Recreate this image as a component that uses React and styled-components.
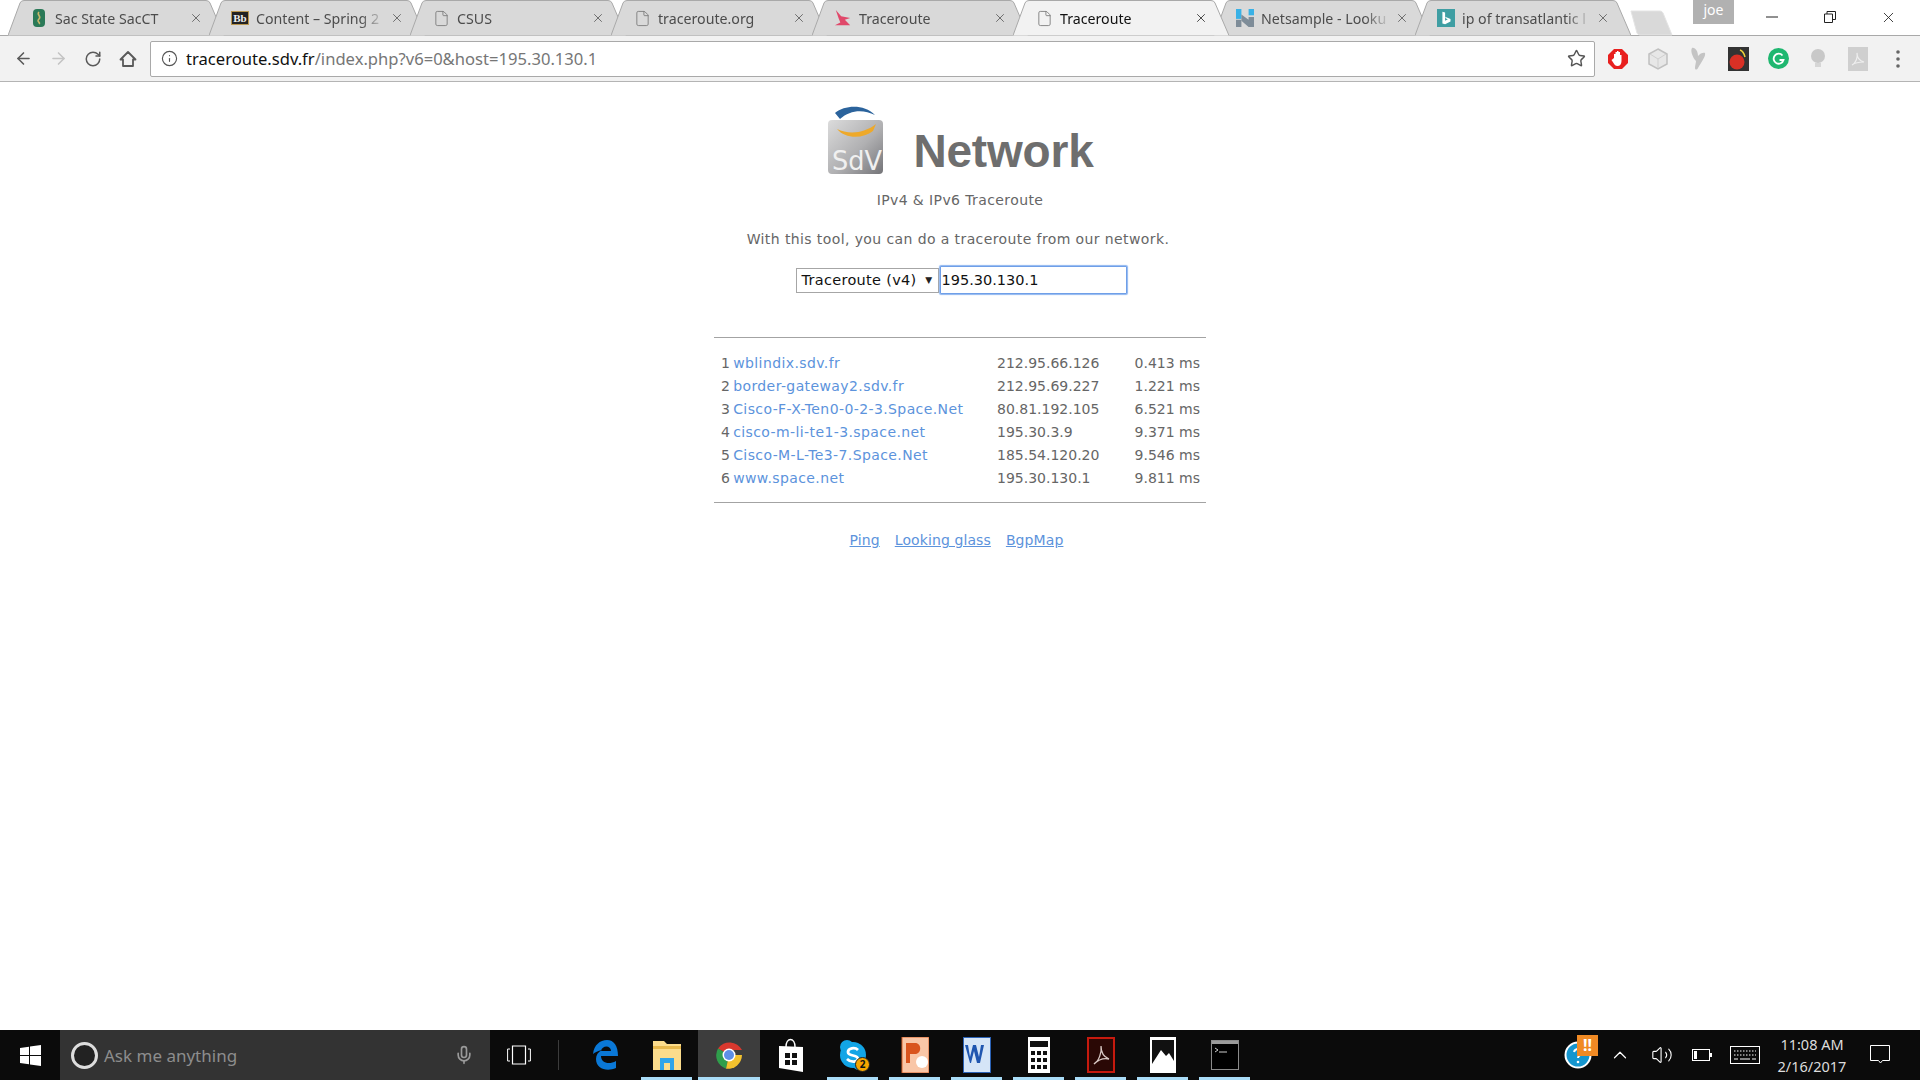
import React from "react";
import styled, { createGlobalStyle } from "styled-components";
import {
  ArrowLeft,
  ArrowRight,
  RotateCw,
  Info,
  Star,
  X,
  File,
  Mic,
  ChevronUp,
  Volume2,
} from "lucide-react";

const GlobalStyle = createGlobalStyle`
  html, body {
    margin: 0;
    height: 100%;
    overflow: hidden;
    background: #fff;
  }
  #root {
    height: 100%;
  }
`;

const Screen = styled.div`
  height: 1080px;
  display: flex;
  flex-direction: column;
  font-family: "Noto Sans", "Liberation Sans", sans-serif;
`;

/* ---------- tab strip ---------- */

const TabStrip = styled.div`
  height: 36px;
  flex: none;
  display: flex;
  padding-left: 8px;
  box-sizing: border-box;
  border-bottom: 1px solid #a9a9a9;
  position: relative;
`;

const TabItem = styled.div`
  width: 216px;
  height: 36px;
  flex: none;
  margin-right: -15px;
  position: relative;
  z-index: ${(p) => (p.$active ? 2 : 1)};
  display: flex;
  align-items: center;
  padding: 0 0 0 22px;
  box-sizing: border-box;
`;

const TabShape = styled.svg`
  position: absolute;
  left: 0;
  top: 0;
  width: 216px;
  height: 36px;
`;

const TabIcon = styled.span`
  width: 18px;
  height: 18px;
  flex: none;
  margin-right: 7px;
  display: flex;
  align-items: center;
  justify-content: center;
  position: relative;
  color: #777;
`;

const TabTitle = styled.span`
  width: 126px;
  flex: none;
  overflow: hidden;
  white-space: nowrap;
  font-size: 14.2px;
  color: ${(p) => (p.$active ? "#111" : "#4c4c4c")};
  position: relative;
  mask-image: linear-gradient(to right, #000 104px, rgba(0, 0, 0, 0.15) 126px);
`;

const TabClose = styled.span`
  position: absolute;
  left: 181px;
  top: 11px;
  display: flex;
  color: ${(p) => (p.$active ? "#333" : "#5f5f5f")};
`;

const NewTab = styled.svg`
  flex: none;
  width: 44px;
  height: 26px;
  margin: 10px 0 0 13px;
  position: relative;
`;

const Profile = styled.div`
  width: 41px;
  height: 24px;
  background: #b1b1b1;
  color: #fff;
  font-size: 14px;
  line-height: 20px;
  text-align: center;
  position: absolute;
  left: 1693px;
  top: 0;
`;

const WindowButtons = styled.div`
  position: absolute;
  right: 3px;
  top: 0;
  display: flex;
`;

const WindowButton = styled.div`
  width: 58px;
  height: 34px;
  display: flex;
  align-items: center;
  justify-content: center;
`;

/* ---------- toolbar ---------- */

const Toolbar = styled.div`
  height: 46px;
  flex: none;
  background: #f2f2f2;
  border-bottom: 1px solid #b4b4b4;
  box-sizing: border-box;
  display: flex;
  align-items: center;
  padding-left: 11px;
`;

const NavButton = styled.div`
  width: 24px;
  height: 24px;
  flex: none;
  margin-right: 11px;
  display: flex;
  align-items: center;
  justify-content: center;
  color: ${(p) => (p.$disabled ? "#c4c4c4" : "#5a5a5a")};

  &:nth-child(4) {
    margin-right: 10px;
  }
`;

const Omnibox = styled.div`
  width: 1445px;
  height: 36px;
  flex: none;
  background: #fff;
  border: 1px solid #a9a9a9;
  border-radius: 2px;
  box-sizing: border-box;
  display: flex;
  align-items: center;
  padding: 0 8px 0 10px;
  color: #555;
`;

const Url = styled.div`
  flex: 1;
  margin-left: 8px;
  font-size: 16.6px;
  color: #767676;
  white-space: nowrap;
`;

const UrlHost = styled.span`
  color: #111;
`;

const Extensions = styled.div`
  display: flex;
  align-items: center;
  flex: none;
  margin-left: 3px;
`;

const ExtensionSlot = styled.div`
  width: 40px;
  height: 24px;
  display: flex;
  align-items: center;
  justify-content: center;
`;

/* ---------- page ---------- */

const Page = styled.main`
  flex: 1;
  background: #fff;
  color: #666;
  font-family: "DejaVu Sans", "Liberation Sans", sans-serif;
  font-size: 14px;
  letter-spacing: 0.4px;
  display: flex;
  flex-direction: column;
  align-items: center;
  padding-top: 22px;
`;

const Brand = styled.div`
  display: flex;
  align-items: flex-end;
  height: 74px;
`;

const BrandName = styled.div`
  font-family: "Liberation Sans", sans-serif;
  font-weight: 700;
  font-size: 46px;
  letter-spacing: -0.2px;
  line-height: 50px;
  color: #6e6e6e;
  margin: 0 0 2px 27px;
`;

const Tagline = styled.div`
  margin-top: 12px;
  line-height: 20px;
`;

const Intro = styled.div`
  margin: 19px 4px 0 0;
  line-height: 20px;
`;

const SearchForm = styled.form`
  margin: 17px 0 0 2px;
  display: flex;
  align-items: center;
`;

const Select = styled.div`
  width: 143px;
  height: 25px;
  box-sizing: border-box;
  border: 1px solid #a6a6a6;
  background: #fff;
  color: #111;
  font-size: 14.5px;
  letter-spacing: 0.3px;
  display: flex;
  align-items: center;
  justify-content: space-between;
  padding: 0 5px 0 5px;
`;

const SelectArrow = styled.span`
  font-size: 9px;
  color: #222;
`;

const AddressInput = styled.input`
  width: 187px;
  height: 28px;
  box-sizing: border-box;
  border: 1px solid #6f9fe8;
  box-shadow: 0 0 1px 1px #8fb6f0;
  border-radius: 1px;
  outline: none;
  margin-left: 1px;
  padding: 0 1px;
  color: #111;
  font-family: "DejaVu Sans", sans-serif;
  font-size: 14.5px;
`;

const Results = styled.section`
  width: 492px;
  margin-top: 43px;
  border-top: 1px solid #a3a3a3;
  border-bottom: 1px solid #a3a3a3;
  box-sizing: border-box;
  padding: 14px 6px 12px 7px;
`;

const HopRow = styled.div`
  display: grid;
  grid-template-columns: 276px 128px 1fr;
  height: 23px;
  line-height: 23px;
  white-space: nowrap;
  word-spacing: -2px;
`;

const HopAddress = styled.span`
  letter-spacing: 0;
`;

const HopTime = styled.span`
  text-align: right;
  letter-spacing: 0;
  word-spacing: 0;
`;

const HopLink = styled.a`
  color: #5c93dc;
  text-decoration: none;
`;

const FooterLinks = styled.nav`
  margin: 27px 7px 0 0;
  display: flex;
  gap: 15px;
  letter-spacing: 0.1px;
`;

const FooterLink = styled.a`
  color: #5c93dc;
  text-decoration: underline;
  line-height: 20px;
`;

/* ---------- taskbar ---------- */

const Taskbar = styled.footer`
  height: 50px;
  flex: none;
  background: #0b0b0b;
  display: flex;
  align-items: stretch;
  color: #fff;
`;

const StartButton = styled.div`
  width: 60px;
  display: flex;
  align-items: center;
  justify-content: center;
`;

const SearchBox = styled.div`
  width: 430px;
  background: #333;
  display: flex;
  align-items: center;
  padding: 0 16px 0 11px;
  box-sizing: border-box;
`;

const CortanaRing = styled.div`
  width: 27px;
  height: 27px;
  box-sizing: border-box;
  border: 3px solid #ddd;
  border-radius: 50%;
  background: #222;
  flex: none;
`;

const SearchText = styled.span`
  flex: 1;
  margin-left: 6px;
  font-size: 17px;
  color: #8d8d8d;
`;

const TaskView = styled.div`
  width: 68px;
  padding-right: 10px;
  box-sizing: border-box;
  display: flex;
  align-items: center;
  justify-content: center;
`;

const Divider = styled.div`
  width: 1px;
  height: 30px;
  background: #3c3c3c;
  align-self: center;
  margin-right: 15px;
`;

const TaskApp = styled.div`
  width: 62px;
  position: relative;
  display: flex;
  align-items: center;
  justify-content: center;
  background: ${(p) => (p.$focused ? "#3d3d3d" : "transparent")};

  &::after {
    content: "";
    display: ${(p) => (p.$running ? "block" : "none")};
    position: absolute;
    left: ${(p) => (p.$focused ? "0" : "5px")};
    right: ${(p) => (p.$focused ? "0" : "6px")};
    bottom: 0;
    height: 3px;
    background: #a9dcf7;
  }
`;

const SkypeBadge = styled.span`
  position: absolute;
  left: 33px;
  top: 27px;
  width: 15px;
  height: 15px;
  border-radius: 50%;
  background: #f7a600;
  border: 1px solid #222;
  box-sizing: border-box;
  color: #111;
  font-size: 10px;
  font-weight: 700;
  line-height: 13px;
  text-align: center;
`;

const Tray = styled.div`
  margin: 0 16px 0 auto;
  display: flex;
  align-items: center;
`;

const TrayIcon = styled.div`
  width: ${(p) => p.$width}px;
  display: flex;
  justify-content: center;
  align-items: center;
  position: relative;
`;

const AlertBadge = styled.span`
  position: absolute;
  left: 19px;
  top: -6px;
  width: 21px;
  height: 21px;
  background: #f08a24;
  color: #fff;
  font-weight: 700;
  font-size: 16px;
  line-height: 21px;
  text-align: center;
`;

const Clock = styled.div`
  width: 88px;
  text-align: center;
  font-size: 14.5px;
  line-height: 22px;
  color: #ddd;
`;

/* ---------- drawn icons ---------- */

const SacStateIcon = () => (
  <svg width="14" height="18" viewBox="0 0 14 18">
    <rect x="1" y="0" width="12" height="18" rx="4" fill="#2b7a58" />
    <path d="M7 3c-3 3 3 4 0 7s2 3 0 5" stroke="#c9b86a" strokeWidth="1.6" fill="none" />
  </svg>
);

const BlackboardIcon = () => (
  <svg width="18" height="14" viewBox="0 0 18 14">
    <rect x="0.5" y="0.5" width="17" height="13" fill="#222" stroke="#b9974f" />
    <text x="9" y="11" textAnchor="middle" fontFamily="'Liberation Serif', serif" fontWeight="700" fontSize="11" fill="#eee">Bb</text>
  </svg>
);

const SwallowIcon = () => (
  <svg width="20" height="18" viewBox="0 0 20 18">
    <path d="M2 0l6 7 10 2-6 2 6 6H1l6-3-2-5z" fill="#e0486a" />
  </svg>
);

const NetsampleIcon = () => (
  <svg width="20" height="20" viewBox="0 0 20 20">
    <rect x="0" y="0" width="6" height="11" fill="#39b1e6" />
    <rect x="14" y="0" width="6" height="7" fill="#39b1e6" />
    <rect x="0" y="12" width="6" height="8" fill="#7e8c98" />
    <path d="M6 6l8 6V9h6v11h-6L6 13z" fill="#7e8c98" />
  </svg>
);

const BingIcon = () => (
  <svg width="20" height="20" viewBox="0 0 20 20">
    <rect width="20" height="20" fill="#3f9ea3" />
    <path d="M6 3l3 1v9l3-1.5-2-1-1-2 6 2.5v3l-6 3-3-1z" fill="#fff" />
  </svg>
);

const CloseGlyph = ({ size = 14, color = "#222" }) => (
  <X size={size} color={color} strokeWidth={1.2} />
);

const MinimizeGlyph = () => (
  <svg width="12" height="12" viewBox="0 0 12 12">
    <path d="M0 6h12" stroke="#222" />
  </svg>
);

const RestoreGlyph = () => (
  <svg width="12" height="12" viewBox="0 0 12 12">
    <path d="M.5 3h8v8.500h-8zM3 3V.5h8.500v8H8.500" fill="none" stroke="#222" />
  </svg>
);

const HomeGlyph = () => (
  <svg width="18" height="18" viewBox="0 0 18 18">
    <path d="M9 2L1.500 9.500H4V16h10V9.500h2.500z" fill="none" stroke="#5a5a5a" strokeWidth="1.800" strokeLinejoin="round" />
  </svg>
);

const AdblockIcon = () => (
  <svg width="20" height="20" viewBox="0 0 20 20">
    <path d="M6 0h8l6 6v8l-6 6H6l-6-6V6z" fill="#e8201f" />
    <path d="M6 9V5h1.500v3-5H9v5-6h1.500v6-5H12v6-3h1.500v6c0 3-1.500 5-4 5-2 0-3-1-4-3l-2-3 1-.7z" fill="#fff" />
  </svg>
);

const CubeIcon = () => (
  <svg width="20" height="22" viewBox="0 0 20 22">
    <path d="M10 1l9 5v10l-9 5-9-5V6z" fill="#e7e7e7" stroke="#c0c0c0" strokeWidth="1.500" />
    <path d="M2 6l8 5 8-5M10 11v9" stroke="#cfcfcf" fill="none" />
  </svg>
);

const ButterflyIcon = () => (
  <svg width="18" height="24" viewBox="0 0 18 24">
    <path d="M3 1c3-1 6 3 6 8 2-3 6-4 7-3 1 3-3 8-7 15-1 2-3 2-3 0 0-3 1-5 1-7C4 11 1 4 3 1z" fill="#c4c4c4" />
  </svg>
);

const BombIcon = () => (
  <svg width="21" height="24" viewBox="0 0 21 24">
    <rect width="21" height="24" fill="#333" />
    <circle cx="9" cy="15" r="7.500" fill="#d93025" />
    <path d="M12 3c3 1 4 3 5 7" stroke="#f1d23a" strokeWidth="1.500" fill="none" />
  </svg>
);

const GrammarlyIcon = () => (
  <svg width="21" height="21" viewBox="0 0 21 21">
    <circle cx="10.500" cy="10.500" r="10.500" fill="#1fb770" />
    <path d="M14.500 7.500a5 5 0 1 0 1 4.500h-4" stroke="#fff" strokeWidth="1.800" fill="none" />
  </svg>
);

const BulbIcon = () => (
  <svg width="14" height="20" viewBox="0 0 14 20">
    <circle cx="7" cy="7" r="7" fill="#c8c8c8" />
    <rect x="4" y="14" width="6" height="4" fill="#d6d6d6" />
  </svg>
);

const GreyPdfIcon = () => (
  <svg width="20" height="24" viewBox="0 0 20 24">
    <rect width="20" height="24" fill="#cfcfcf" />
    <path d="M4 18c4-2 6-8 5-12 0 5 3 8 7 9-4 0-8 0-12 3z" fill="none" stroke="#eee" strokeWidth="1.200" />
  </svg>
);

const MenuDots = () => (
  <svg width="4" height="20" viewBox="0 0 4 20">
    <circle cx="2" cy="3" r="1.800" fill="#666" />
    <circle cx="2" cy="10" r="1.800" fill="#666" />
    <circle cx="2" cy="17" r="1.800" fill="#666" />
  </svg>
);

const SdvLogo = () => (
  <svg width="60" height="74" viewBox="0 0 60 74">
    <defs>
      <linearGradient id="sdvBody" x1="0" y1="0" x2="1" y2="1">
        <stop offset="0" stopColor="#dcdcdc" />
        <stop offset="0.55" stopColor="#b0b0b2" />
        <stop offset="1" stopColor="#747478" />
      </linearGradient>
    </defs>
    <path d="M9 9C19 1 38 0 49 11 37 5 24 6 14 15z" fill="#2b639c" />
    <rect x="2" y="16" width="55" height="54" rx="4" fill="url(#sdvBody)" />
    <path d="M11 25c12 6 28 4 39-5l-3 7c-10 8-28 8-36-2z" fill="#eea92a" />
    <text x="31" y="66" textAnchor="middle" fontFamily="'DejaVu Sans', sans-serif" fontSize="27" letterSpacing="0" textLength="50" lengthAdjust="spacingAndGlyphs" fill="#f0f0f0">SdV</text>
  </svg>
);

const EdgeIcon = () => (
  <svg width="26" height="30" viewBox="0 0 26 30">
    <path d="M1 14C2 5 8 0 15 0c7 0 11 6 11 16H9c0 7 8 9 15 5v7c-9 4-20 1-20-9 0-4 2-7 6-9-4 1-7 2-9 4zM9 11h10c0-6-9-6-10 0z" fill="#0a78d7" />
  </svg>
);

const FolderIcon = () => (
  <svg width="28" height="30" viewBox="0 0 28 30">
    <path d="M0 1h11l3 3h14v26H0z" fill="#fbdc8c" />
    <path d="M0 6h28v3H0z" fill="#e8b94d" />
    <path d="M7 18h14v12h-4v-7h-6v7H7z" fill="#2fa4ea" />
  </svg>
);

const ChromeIcon = () => (
  <svg width="28" height="28" viewBox="0 0 28 28">
    <path d="M14 14L3 7.500A14 14 0 0 1 27 9H14z" fill="#d8382e" />
    <path d="M14 14L3 7.500a14 14 0 0 0 8 20.200z" fill="#2f9e4b" />
    <path d="M14 14h13a14 14 0 0 1-16 13.700z" fill="#f3c22e" />
    <circle cx="14" cy="14" r="6.500" fill="#fff" />
    <circle cx="14" cy="14" r="5" fill="#5e90e6" />
  </svg>
);

const StoreIcon = () => (
  <svg width="26" height="34" viewBox="0 0 26 34">
    <path d="M8 9c0-10 9-10 9 0" fill="none" stroke="#fff" strokeWidth="1.500" />
    <path d="M1 8l24 1v25L1 30z" fill="#fff" />
    <path d="M7 15h5v5H7zM14 15h5v5h-5zM7 22h5v5H7zM14 22h5v5h-5z" fill="#111" />
  </svg>
);

const SkypeIcon = () => (
  <svg width="28" height="30" viewBox="0 0 28 30">
    <circle cx="14" cy="15" r="13" fill="#12a5e6" />
    <circle cx="8" cy="7" r="7" fill="#12a5e6" />
    <circle cx="20" cy="23" r="7" fill="#12a5e6" />
    <path d="M19 10c-3-3-10-2-10 2 0 5 10 2 10 7 0 3-7 4-11 0" fill="none" stroke="#fff" strokeWidth="2.800" />
  </svg>
);

const PowerPointIcon = () => (
  <svg width="28" height="36" viewBox="0 0 28 36">
    <rect x="1" y="0" width="27" height="36" fill="#f9c6a7" />
    <rect x="1" y="0" width="27" height="36" fill="none" stroke="#d9622b" />
    <path d="M5 6h9c7 0 7 11 0 11H9v9H5z" fill="#d9541e" />
    <circle cx="21" cy="25" r="6" fill="#fff" />
  </svg>
);

const WordIcon = () => (
  <svg width="28" height="36" viewBox="0 0 28 36">
    <rect x="0.500" y="0.500" width="27" height="35" fill="#d5e5f7" stroke="#2b62b6" />
    <path d="M2 8h3l2 12 3-12h3l3 12 2-12h3l-4 18h-3l-3-12-3 12H7z" fill="#1f56b0" />
  </svg>
);

const CalculatorIcon = () => (
  <svg width="22" height="36" viewBox="0 0 22 36">
    <rect width="22" height="36" fill="#fff" />
    <rect x="2" y="4" width="18" height="6" fill="#111" />
    <path d="M3 14h4v4H3zM9 14h4v4H9zM15 14h4v4h-4zM3 21h4v4H3zM9 21h4v4H9zM15 21h4v4h-4zM3 28h4v4H3zM9 28h4v4H9zM15 28h4v4h-4z" fill="#111" />
  </svg>
);

const AcrobatIcon = () => (
  <svg width="28" height="36" viewBox="0 0 28 36">
    <rect x="1" y="1" width="26" height="34" fill="#2a0805" stroke="#c61a0e" strokeWidth="2" />
    <path d="M7 27c5-3 8-12 7-18 0 7 3 11 8 13-5-1-10 0-15 5z" fill="none" stroke="#d8c8c4" strokeWidth="1.300" />
  </svg>
);

const PhotosIcon = () => (
  <svg width="26" height="36" viewBox="0 0 26 36">
    <rect width="26" height="36" fill="#fff" />
    <rect x="2" y="3" width="22" height="27" fill="#111" />
    <path d="M2 27l9-14 5 6 3-3 5 8v6H2z" fill="#fff" />
  </svg>
);

const ConsoleIcon = () => (
  <svg width="28" height="30" viewBox="0 0 28 30">
    <rect x="0.500" y="0.500" width="27" height="29" fill="#000" stroke="#8a8a8a" />
    <rect x="1" y="1" width="26" height="3" fill="#9a9a9a" />
    <path d="M4 8l3 2-3 2M8 12h8" stroke="#ccc" fill="none" />
  </svg>
);

const WindowsLogo = () => (
  <svg width="21" height="21" viewBox="0 0 21 21">
    <path d="M0 3l9-1.200V10H0zM10 1.600L21 0v10H10zM0 11h9v8.200L0 18zM10 11h11v10l-11-1.600z" fill="#fff" />
  </svg>
);

const TaskViewIcon = () => (
  <svg width="24" height="20" viewBox="0 0 24 20">
    <path d="M5.500 1h13v18h-13z" fill="none" stroke="#fff" strokeWidth="1.200" />
    <path d="M3 4H.6v12H3M21 4h2.400v12H21" fill="none" stroke="#fff" />
  </svg>
);

const HelpTrayIcon = () => (
  <svg width="28" height="28" viewBox="0 0 28 28">
    <circle cx="14" cy="14" r="12.500" fill="#1596cf" stroke="#fff" strokeWidth="2" />
    <path d="M10 11c1-4 8-4 8 0 0 3-4 3-4 6" fill="none" stroke="#fff" strokeWidth="2" />
    <circle cx="14" cy="21" r="1.300" fill="#fff" />
  </svg>
);

const BatteryIcon = () => (
  <svg width="20" height="14" viewBox="0 0 20 14">
    <rect x="0.500" y="1.500" width="17" height="11" fill="none" stroke="#fff" />
    <rect x="2" y="3" width="3" height="8" fill="#fff" />
    <rect x="18" y="5" width="2" height="4" fill="#fff" />
  </svg>
);

const KeyboardIcon = () => (
  <svg width="30" height="18" viewBox="0 0 30 18">
    <rect x="0.500" y="0.500" width="29" height="17" fill="none" stroke="#fff" />
    <path d="M4 5h22M4 9h22" stroke="#fff" strokeDasharray="1.500 1.500" />
    <path d="M4 13h4M10 13h10M22 13h4" stroke="#fff" />
  </svg>
);

const NotificationIcon = () => (
  <svg width="20" height="20" viewBox="0 0 20 20">
    <path d="M.5.500h19v15h-7l-2 2.500-2-2.500h-8z" fill="none" stroke="#fff" />
  </svg>
);

/* ---------- data ---------- */

const tabs = [
  { title: "Sac State SacCT", icon: <SacStateIcon /> },
  { title: "Content – Spring 2", icon: <BlackboardIcon /> },
  { title: "CSUS" },
  { title: "traceroute.org" },
  { title: "Traceroute", icon: <SwallowIcon /> },
  { title: "Traceroute", active: true },
  { title: "Netsample - Looku", icon: <NetsampleIcon /> },
  { title: "ip of transatlantic l", icon: <BingIcon /> },
];

const hops = [
  ["1", "wblindix.sdv.fr", "212.95.66.126", "0.413 ms"],
  ["2", "border-gateway2.sdv.fr", "212.95.69.227", "1.221 ms"],
  ["3", "Cisco-F-X-Ten0-0-2-3.Space.Net", "80.81.192.105", "6.521 ms"],
  ["4", "cisco-m-li-te1-3.space.net", "195.30.3.9", "9.371 ms"],
  ["5", "Cisco-M-L-Te3-7.Space.Net", "185.54.120.20", "9.546 ms"],
  ["6", "www.space.net", "195.30.130.1", "9.811 ms"],
];

const extensions = [
  <AdblockIcon key="a" />,
  <CubeIcon key="b" />,
  <ButterflyIcon key="c" />,
  <BombIcon key="d" />,
  <GrammarlyIcon key="e" />,
  <BulbIcon key="f" />,
  <GreyPdfIcon key="g" />,
  <MenuDots key="h" />,
];

function Tab({ title, icon, active }) {
  return (
    <TabItem $active={active}>
      <TabShape viewBox="0 0 216 36">
        <path
          d="M0 35.500 L12 3 Q13 .5 16 .5 H198 Q201 .5 202 3 L216 35.500"
          fill={active ? "#f2f2f2" : "#d9d9d9"}
          stroke="#a9a9a9"
        />
      </TabShape>
      <TabIcon>{icon || <File size={17} strokeWidth={1.2} />}</TabIcon>
      <TabTitle $active={active}>{title}</TabTitle>
      <TabClose $active={active}>
        <X size={14} strokeWidth={1.5} />
      </TabClose>
    </TabItem>
  );
}

export default function App() {
  return (
    <>
      <GlobalStyle />
      <Screen>
        <TabStrip>
          {tabs.map((t, i) => (
            <Tab key={i} {...t} />
          ))}
          <NewTab viewBox="0 0 44 26">
            <path d="M2 1h29q2 0 3 2l9 22H11q-2 0-3-2z" fill="#d9d9d9" stroke="#e4e4e4" />
          </NewTab>
          <Profile>joe</Profile>
          <WindowButtons>
            <WindowButton>
              <MinimizeGlyph />
            </WindowButton>
            <WindowButton>
              <RestoreGlyph />
            </WindowButton>
            <WindowButton>
              <CloseGlyph size={17} />
            </WindowButton>
          </WindowButtons>
        </TabStrip>

        <Toolbar>
          <NavButton>
            <ArrowLeft size={19} />
          </NavButton>
          <NavButton $disabled>
            <ArrowRight size={19} />
          </NavButton>
          <NavButton>
            <RotateCw size={18} />
          </NavButton>
          <NavButton>
            <HomeGlyph />
          </NavButton>
          <Omnibox>
            <Info size={17} strokeWidth={1.6} />
            <Url>
              <UrlHost>traceroute.sdv.fr</UrlHost>/index.php?v6=0&amp;host=195.30.130.1
            </Url>
            <Star size={19} strokeWidth={1.8} />
          </Omnibox>
          <Extensions>
            {extensions.map((e, i) => (
              <ExtensionSlot key={i}>{e}</ExtensionSlot>
            ))}
          </Extensions>
        </Toolbar>

        <Page>
          <Brand>
            <SdvLogo />
            <BrandName>Network</BrandName>
          </Brand>
          <Tagline>IPv4 &amp; IPv6 Traceroute</Tagline>
          <Intro>With this tool, you can do a traceroute from our network.</Intro>
          <SearchForm>
            <Select>
              Traceroute (v4)
              <SelectArrow>▼</SelectArrow>
            </Select>
            <AddressInput defaultValue="195.30.130.1" />
          </SearchForm>
          <Results>
            {hops.map(([n, host, ip, time]) => (
              <HopRow key={n}>
                <span>
                  {n} <HopLink href="#">{host}</HopLink>
                </span>
                <HopAddress>{ip}</HopAddress>
                <HopTime>{time}</HopTime>
              </HopRow>
            ))}
          </Results>
          <FooterLinks>
            <FooterLink href="#">Ping</FooterLink>
            <FooterLink href="#">Looking glass</FooterLink>
            <FooterLink href="#">BgpMap</FooterLink>
          </FooterLinks>
        </Page>

        <Taskbar>
          <StartButton>
            <WindowsLogo />
          </StartButton>
          <SearchBox>
            <CortanaRing />
            <SearchText>Ask me anything</SearchText>
            <Mic size={20} color="#9a9a9a" />
          </SearchBox>
          <TaskView>
            <TaskViewIcon />
          </TaskView>
          <Divider />
          <TaskApp>
            <EdgeIcon />
          </TaskApp>
          <TaskApp $running>
            <FolderIcon />
          </TaskApp>
          <TaskApp $running $focused>
            <ChromeIcon />
          </TaskApp>
          <TaskApp>
            <StoreIcon />
          </TaskApp>
          <TaskApp $running>
            <SkypeIcon />
            <SkypeBadge>2</SkypeBadge>
          </TaskApp>
          <TaskApp $running>
            <PowerPointIcon />
          </TaskApp>
          <TaskApp $running>
            <WordIcon />
          </TaskApp>
          <TaskApp $running>
            <CalculatorIcon />
          </TaskApp>
          <TaskApp $running>
            <AcrobatIcon />
          </TaskApp>
          <TaskApp $running>
            <PhotosIcon />
          </TaskApp>
          <TaskApp $running>
            <ConsoleIcon />
          </TaskApp>
          <Tray>
            <TrayIcon $width={40}>
              <HelpTrayIcon />
              <AlertBadge>!!</AlertBadge>
            </TrayIcon>
            <TrayIcon $width={44}>
              <ChevronUp size={22} strokeWidth={1.3} />
            </TrayIcon>
            <TrayIcon $width={40}>
              <Volume2 size={22} strokeWidth={1.2} />
            </TrayIcon>
            <TrayIcon $width={40}>
              <BatteryIcon />
            </TrayIcon>
            <TrayIcon $width={46}>
              <KeyboardIcon />
            </TrayIcon>
            <Clock>
              11:08 AM
              <br />
              2/16/2017
            </Clock>
            <TrayIcon $width={48}>
              <NotificationIcon />
            </TrayIcon>
          </Tray>
        </Taskbar>
      </Screen>
    </>
  );
}
